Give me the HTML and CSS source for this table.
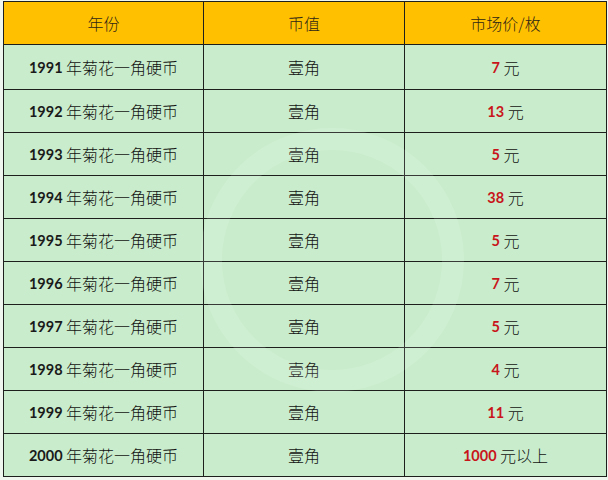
FILE: index.html
```html
<!DOCTYPE html>
<html lang="zh">
<head>
<meta charset="utf-8">
<link rel="stylesheet" href="styles.css">
</head>
<body>
<div class="wrap">
  <div class="grid">
    <div class="cell head">年份</div>
    <div class="cell head">币值</div>
    <div class="cell head">市场价/枚</div>

    <div class="cell first"><b class="num">1991</b> 年菊花一角硬币</div>
    <div class="cell first">壹角</div>
    <div class="cell first"><b class="num red">7</b> 元</div>

    <div class="cell"><b class="num">1992</b> 年菊花一角硬币</div>
    <div class="cell">壹角</div>
    <div class="cell"><b class="num red">13</b> 元</div>

    <div class="cell"><b class="num">1993</b> 年菊花一角硬币</div>
    <div class="cell">壹角</div>
    <div class="cell"><b class="num red">5</b> 元</div>

    <div class="cell"><b class="num">1994</b> 年菊花一角硬币</div>
    <div class="cell">壹角</div>
    <div class="cell"><b class="num red">38</b> 元</div>

    <div class="cell"><b class="num">1995</b> 年菊花一角硬币</div>
    <div class="cell">壹角</div>
    <div class="cell"><b class="num red">5</b> 元</div>

    <div class="cell"><b class="num">1996</b> 年菊花一角硬币</div>
    <div class="cell">壹角</div>
    <div class="cell"><b class="num red">7</b> 元</div>

    <div class="cell"><b class="num">1997</b> 年菊花一角硬币</div>
    <div class="cell">壹角</div>
    <div class="cell"><b class="num red">5</b> 元</div>

    <div class="cell"><b class="num">1998</b> 年菊花一角硬币</div>
    <div class="cell">壹角</div>
    <div class="cell"><b class="num red">4</b> 元</div>

    <div class="cell"><b class="num">1999</b> 年菊花一角硬币</div>
    <div class="cell">壹角</div>
    <div class="cell"><b class="num red">11</b> 元</div>

    <div class="cell"><b class="num">2000</b> 年菊花一角硬币</div>
    <div class="cell">壹角</div>
    <div class="cell"><b class="num red">1000</b> 元以上</div>
  </div>
  <div class="watermark"></div>
</div>
</body>
</html>
```
FILE: styles.css
```css
html, body {
  margin: 0;
  padding: 0;
  background: #eef6ee;
}
body {
  width: 608px;
  height: 480px;
  overflow: hidden;
}
.wrap {
  position: relative;
  padding: 1px 0 0 3px;
}
.grid {
  display: grid;
  grid-template-columns: 199px 200px 201px;
  grid-template-rows: 42px 44px repeat(9, 42px);
  gap: 1px;
  padding: 1px;
  width: max-content;
  background: #1c1f1c;
}
.cell {
  display: flex;
  align-items: center;
  justify-content: center;
  background: #c9edcc;
  font-family: "Noto Sans CJK SC", "Noto Sans", sans-serif;
  font-size: 16px;
  font-weight: 300;
  color: #111;
  white-space: pre;
}
.head {
  background: #ffc000;
  color: #2e2616;
}
.num {
  font-family: Lato, "Open Sans", sans-serif;
  font-weight: 700;
  font-size: 14.5px;
  color: #1a1a1a;
}
.red {
  color: #c8151b;
}
.watermark {
  position: absolute;
  left: 200px;
  top: 128px;
  width: 220px;
  height: 220px;
  border: 22px solid rgba(255, 255, 255, 0.12);
  border-radius: 50%;
  pointer-events: none;
}
```
